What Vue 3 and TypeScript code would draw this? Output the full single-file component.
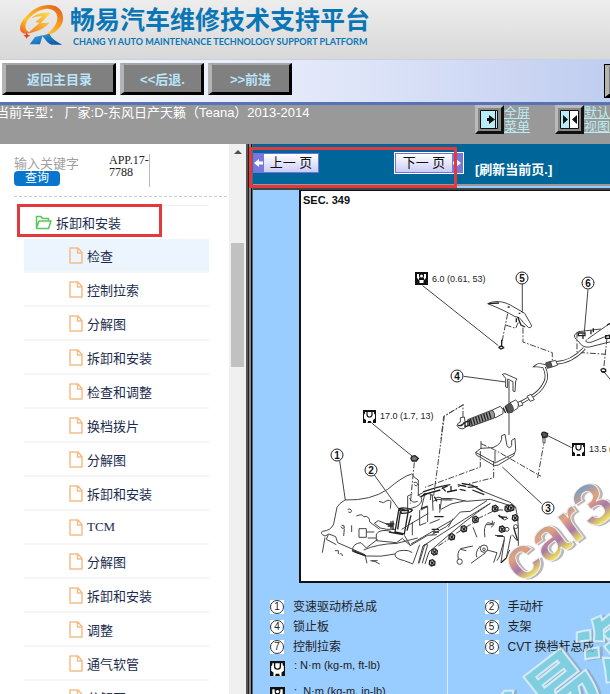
<script setup lang="ts">
import { ref } from 'vue'

interface LegendRow {
  left: [string, string]
  right: [string, string]
}

const keyword = ref('')
const selected = ref(0)
const items: string[] = [
  '检查', '控制拉索', '分解图', '拆卸和安装', '检查和调整', '换档拨片', '分解图',
  '拆卸和安装', 'TCM', '分解图', '拆卸和安装', '调整', '通气软管', '分解图',
]
const legend: LegendRow[] = [
  { left: ['1', '变速驱动桥总成'], right: ['2', '手动杆'] },
  { left: ['4', '锁止板'], right: ['5', '支架'] },
  { left: ['7', '控制拉索'], right: ['8', 'CVT 换档杆总成'] },
]
const callouts = [
  { n: 5, x: 521, y: 279 },
  { n: 6, x: 587, y: 284 },
  { n: 4, x: 456, y: 377 },
  { n: 1, x: 336, y: 456 },
  { n: 2, x: 370, y: 471 },
  { n: 3, x: 547, y: 509 },
]
const bolts: [number, number][] = [
  [552, 134], [590, 134], [493, 167], [458, 195], [422, 219], [370, 264],
  [612, 162], [573, 196], [363, 297], [600, 132],
]
</script>

<template>
  <div class="page">
    <header class="banner">
      <svg class="logo" viewBox="0 0 210 177" aria-hidden="true">
        <defs>
          <linearGradient id="flame" x1="0" y1="1" x2="1" y2="0">
            <stop offset="0" stop-color="#e8451c" />
            <stop offset=".35" stop-color="#fdc92a" />
            <stop offset=".65" stop-color="#f79a1c" />
            <stop offset="1" stop-color="#e0501c" />
          </linearGradient>
          <linearGradient id="zed" x1="0" y1="1" x2="1" y2="0">
            <stop offset="0" stop-color="#f0781e" />
            <stop offset="1" stop-color="#ffe34a" />
          </linearGradient>
          <linearGradient id="leg" x1="0" y1="0" x2="1" y2="1">
            <stop offset="0" stop-color="#35a3e6" />
            <stop offset="1" stop-color="#0a4f9e" />
          </linearGradient>
        </defs>
        <path fill="url(#flame)" d="M72 101C50 92 62 62 84 44C100 27 123 14 150 15C176 16 191 35 189 59C187 84 160 105 125 111C151 97 171 78 172 54C172 35 155 24 136 27C110 31 88 49 79 68C73 82 77 92 92 98Z" />
        <path fill="url(#zed)" d="M94 56C106 42 122 37 153 38L122 70L148 68C135 84 114 94 82 101L119 68L106 67L127 49C113 48 105 50 94 56Z" />
        <path fill="url(#leg)" d="M89 133L105 111L128 106L120 133ZM126 107L149 101C153 115 168 123 187 134L154 134C142 129 137 119 126 107Z" />
        <path fill="#e63c24" d="M80 96L83 104L91 107L83 110L80 117L77 110L70 107L77 104Z" />
      </svg>
      <div class="brand">
        <h1>畅易汽车维修技术支持平台</h1>
        <p>CHANG YI AUTO MAINTENANCE TECHNOLOGY SUPPORT PLATFORM</p>
      </div>
    </header>

    <nav class="toolbar">
      <button type="button" class="wide">返回主目录</button>
      <button type="button">&lt;&lt;后退.</button>
      <button type="button">&gt;&gt;前进</button>
      <button type="button" class="exit" aria-label="退出"></button>
    </nav>

    <div class="status">
      <div class="model">当前车型： 厂家:D-东风日产天籁（Teana）2013-2014</div>
      <a href="#full" class="view">
        <svg viewBox="0 0 29 29" aria-hidden="true">
          <path fill="#bbb" d="M0 0h29l-3 3H3v23l-3 3z" />
          <path fill="#111" d="M29 0v29H0l3-3h23V3z" />
          <path fill="#888" d="M3 3h23v23H3z" />
          <path fill="#b9ecf5" stroke="#111" stroke-width="1" d="M5.500 5.500h17v18h-17z" />
          <path fill="#111" d="M14 10l6 4.500-6 4.500zM12 13h3v3h-3zM20 6h1v17h-1z" />
        </svg>
        <span>全屏<br>菜单</span>
      </a>
      <a href="#default" class="view">
        <svg viewBox="0 0 29 29" aria-hidden="true">
          <path fill="#bbb" d="M0 0h29l-3 3H3v23l-3 3z" />
          <path fill="#111" d="M29 0v29H0l3-3h23V3z" />
          <path fill="#888" d="M3 3h23v23H3z" />
          <path fill="#fff" stroke="#111" stroke-width="1" d="M5.500 5.500h18v18h-18z" />
          <path fill="#b9ecf5" d="M6 6h8v17H6z" />
          <path fill="#111" d="M14 6h1v17h-1zM8 10l5 4.500L8 19zM22 10l-5 4.500 5 4.500z" />
        </svg>
        <span>默认<br>视图</span>
      </a>
    </div>

    <div class="body">
      <aside class="side">
        <form class="search" @submit.prevent>
          <div class="query">
            <input v-model="keyword" aria-label="输入关键字" placeholder="输入关键字">
            <button type="submit">查询</button>
          </div>
          <div class="code">APP.17-7788</div>
        </form>
        <div class="tree">
          <div class="folder">
            <svg viewBox="0 0 17 15" aria-hidden="true">
              <path fill="none" stroke="#5cc45c" stroke-width="1.500" stroke-linejoin="round" d="M1.500 13V1.500h4.500l1.500 2h6v2.500M1.500 13l2.500-7h12l-2.500 7.500H2z" />
            </svg>
            <span>拆卸和安装</span>
            <i class="mark"></i>
          </div>
          <ul>
            <li v-for="(item, i) in items" :key="i">
              <a href="#doc" :class="{ active: selected === i }" @click.prevent="selected = i">
                <svg viewBox="0 0 14 17" aria-hidden="true">
                  <path fill="none" stroke="#f4bd88" stroke-width="1.500" stroke-linejoin="round" d="M1 1h8l4 4.500V16H1zM8.500 1v5H13" />
                </svg>
                <span>{{ item }}</span>
              </a>
            </li>
          </ul>
        </div>
      </aside>
      <div class="scroll">
        <i class="arrow"></i>
        <i class="thumb"></i>
      </div>
      <div class="split"></div>

      <main class="doc">
        <div class="pager">
          <button type="button" class="prev">
            <i><svg viewBox="0 0 10 10" aria-hidden="true"><path fill="#fff" d="M0 5l5-4v2.500h4v3H5V9z" /></svg></i>
            <span>上一 页</span>
          </button>
          <button type="button" class="next">
            <span>下一 页</span>
            <i><svg viewBox="0 0 10 10" aria-hidden="true"><path fill="#fff" d="M9 5L4 1v2.500H1v3h3V9z" /></svg></i>
          </button>
          <a href="#reload">[刷新当前页.]</a>
          <i class="mark"></i>
        </div>

        <div class="sheet">
          <figure>
            <svg viewBox="300 192 310 390" preserveAspectRatio="xMinYMin slice" role="img" aria-label="SEC. 349">
              <defs>
                <g id="torque">
                  <path fill="#111" d="M0 0h13v13H0z" />
                  <path fill="#fff" d="M2 2h9v1.500l1 1v4L10 10v3H8.500l-.5-2H5l-.5 2H3v-3L1 8.500v-4l1-1z" />
                  <path fill="none" stroke="#111" stroke-width="1.200" d="M4 1.500v3a2.500 2.500 0 0 0 5 0v-3" />
                </g>
                <g id="torque-in">
                  <path fill="#111" d="M0 0h13v13H0z" />
                  <path fill="#fff" d="M2 2h2v2a2.500 2.500 0 0 0 5 0V2h2v4L8.500 8.500V11h-4V8.500L2 6z" />
                  <circle cx="6.500" cy="4" r="1.500" fill="#fff" />
                  <path fill="#111" d="M4 6h5v2H4z" />
                </g>
              </defs>
              <text class="sec" x="302" y="205">SEC. 349</text>
              <text class="val" x="431" y="283">6.0 (0.61, 53)</text>
              <text class="val" x="379" y="420">17.0 (1.7, 13)</text>
              <text class="val" x="588" y="453">13.5 (</text>
              <use href="#torque-in" x="414" y="273" />
              <use href="#torque" x="362" y="411" />
              <use href="#torque" x="571" y="444" />

              <g class="ink" transform="translate(290 190) scale(.3333)">
                <path d="M395 290L622 470M694 284V372M891 302L880 430M518 562L644 579" />
                <path d="M590 344L604 339Q632 334 658 348L701 373L721 408Q724 416 713 416L697 401Q686 382 672 383Q641 364 590 344Z" />
                <path class="bold" d="M592 344L624 342M680 384L690 408L702 414M676 388V400M650 354h6M683 373h5" />
                <path class="dash" d="M650 374L632 464M644 408L674 418L682 400M696 416V459L784 491V516M858 430V490L945 496M948 448L938 540" />
                <path class="bold" d="M632 452V474M624 476Q630 466 638 476L630 480Z" />
                <path d="M850 438Q848 446 862 456Q874 478 896 474L960 458M850 438L862 428L930 420M886 452Q880 462 900 460L960 436M890 450L944 412L960 402" />
                <path class="bold" d="M862 432h20v8h-20zM900 424v12M907 418v12M948 408l12-6M944 440h12v8h-12zM876 436v14M930 542q6-6 14 0v6h-12zM934 550h8" />
                <path d="M942 552L960 574" />
              </g>

              <g class="ink" transform="translate(440 330) scale(.3333)">
                <path class="tube" d="M342 102Q392 100 430 58" />
                <path class="tube-in" d="M342 102Q392 100 430 58" />
                <path class="tube" d="M316 112Q296 104 288 110Q296 110 308 112Q322 140 312 160Q298 190 266 206L238 222" />
                <path class="tube-in" d="M316 112Q296 104 288 110Q296 110 308 112Q322 140 312 160Q298 190 266 206L238 222" />
                <path fill="#fff" d="M328 98L344 94L350 108L334 114Z" />
                <path fill="#555" d="M314 102L328 97L333 114L319 118Z" />
                <path fill="#fff" d="M258 202L270 196L280 212L268 217ZM230 220L240 216L246 228L234 232Z" />
                <path fill="#fff" d="M206 222L224 213Q236 220 230 238L212 249Z" />
                <path fill="#555" d="M194 230L208 222Q222 236 214 250L200 252Z" />
                <path fill="#fff" d="M154 243L178 232Q190 240 186 254L162 267Z" />
                <path fill="#999" d="M80 272L154 243Q164 254 160 267L88 293Q78 284 80 272Z" />
                <path class="bold" d="M88 270l6 20M96 267l6 20M104 264l6 20M112 261l6 20M120 258l6 20M128 255l6 20M136 252l6 20M144 249l6 20M186 236l8 16M192 232l8 18" />
                <path fill="#fff" d="M58 266L70 264L72 278L80 276V290L66 300Q52 300 48 290Q50 280 58 280Z" />
                <path class="bold" d="M50 288Q62 294 70 280M72 280l14-5v14l-14 4z" />
                <path fill="#fff" d="M184 136L192 134L228 150L224 156L222 188L216 186L216 158L200 150L200 176L194 174V148Z" />
                <path d="M204 156V228M204 252V318" />
                <path class="dash" d="M66 264V228L8 262L0 330" />
                <path fill="#fff" d="M104 370L120 358L156 356Q186 344 182 320L192 316L198 350Q206 362 212 350V334L222 328L224 364L218 380L172 408L160 410L106 378Z" />
                <path d="M104 370L162 402L222 372M120 360V336M162 398V366" />
                <path class="dash" d="M120 344L160 362L300 442" />
                <path class="bold" fill="#555" d="M302 316Q302 308 312 310L320 314L318 324L306 326Z" />
                <path d="M306 326V342h6V326M320 320L392 356" />
              </g>

              <g class="ink" transform="translate(290 380) scale(.3333)">
                <path d="M242 132L364 232M146 246L163 363M250 288L322 388M752 374L634 264" />
                <path class="bold" fill="#777" d="M360 238Q362 230 372 230L382 238L376 246L364 246Z" />
                <path class="dash" d="M370 250L358 374M518 76L460 112L428 350M568 216V264L402 325M608 246V296L496 324M740 297L758 196" />
              </g>

              <g class="ink" transform="translate(310 465) scale(.3333)">
                <path d="M102 108Q180 110 230 76Q274 38 302 30Q308 34 310 40L322 48V94M102 108Q84 118 78 130L68 180Q60 200 34 202Q26 210 42 216L54 210L74 218L80 236L162 272L168 298M42 220L34 266M52 212L46 226L76 242" />
                <path d="M110 136q8-4 12 4q-2 10-10 4M92 184q10-2 8 8q-8 4-10-4M100 194l-2 22M122 184v20M72 260h10M82 260v10M86 270q8-4 8 6M178 290q14 0 28 10M136 156Q154 148 158 158Q176 154 176 174L206 196M204 112L218 116Q232 104 240 112L238 134M182 290h18" />
                <path d="M144 194h22v26h-22zM166 204h24M170 222h26M190 178L202 170L242 186M190 178L208 192Q224 198 252 196M196 210Q208 194 240 202M196 210V230L256 236L276 222M124 262Q124 238 150 236L166 252L200 226M124 262L166 276M158 258Q198 240 258 238L320 222M166 276Q210 280 252 270Q258 256 292 260L304 266M252 270Q250 284 280 290L306 300" />
                <path class="bold" d="M264 134L252 204L280 210L292 140ZM264 134Q280 128 304 138Q300 148 272 148ZM270 140h24M226 180h24M230 186h16M240 172v22M246 170v28M126 260l34 14M132 264l32 12M234 204L276 212M268 144l-8 52M300 154l-12 46" />
                <path d="M304 90L290 96V132M296 102Q302 120 320 112M322 94L330 98L342 88L360 90L358 108M330 98Q338 116 316 128L286 138M342 88L330 138L350 128V174M358 94L364 92L366 140M308 56q10-4 12 6q-4 8-10 0M320 94L336 86M372 104Q380 96 392 102L386 146M326 138V184L346 176M386 120V136M352 148L272 196M366 112Q380 102 398 108L424 108" />
                <path class="bold" d="M336 84Q380 68 418 62M452 58L484 64L516 82M336 92L388 78M392 74l18-8M408 84L438 78M440 62l26 6M470 70l30-2M394 70l10 12M420 66v14M446 76l18 4M484 78l36 14M330 98l18-8M370 98l8 14M396 104h24M370 158h28M362 196h22M330 134l20-8M366 204h18" />
                <path d="M392 104Q430 100 468 112L538 106L614 130L620 162L622 192V254M390 136L420 120L464 110M538 118L460 166L376 220L336 246L322 298M528 110L478 142L448 144L406 188L362 212M426 164L412 190M538 118Q470 162 354 264L342 300M386 166L356 178M304 174V214M300 240L420 170M280 214L298 244L276 226M296 246L350 214L378 212M516 82L600 116L614 130" />
                <path d="M326 242L306 298M342 240L324 298M350 242L334 298M336 246L350 240M486 190L498 220M522 220Q516 188 530 176L548 180M526 182h18v-12M560 138h16M564 152L580 168L592 162M552 214L580 218V226L566 276L558 290M580 226L570 296M600 214L586 282L596 258M448 254L486 246M442 286Q438 264 448 256L466 260M528 258L558 266L548 296M508 246Q490 266 498 280M480 298L524 266M604 212L618 230M540 190q10-4 10-16" />
                <path class="bold" d="M562 154l16 12M564 158l24 2M558 216h18M572 190l10 10M608 190l12 40M586 282l-16 14" />
                <path class="dash" d="M382 246L430 214M436 208L490 174M500 164L550 140" />
                <g v-for="(b, i) in bolts" :key="i" :transform="`translate(${b[0]} ${b[1]})`">
                  <path class="bold" fill="#ddd" d="M-7-7L2-10L9-4L8 6L-2 9L-8 4Z" />
                  <path class="bold" d="M-4-5L5 5M5-5L-3 5" />
                </g>
                <circle cx="519" cy="254" r="11" />
                <circle cx="519" cy="256" r="4" />
                <circle cx="446" cy="293" r="8" />
                <circle cx="588" cy="196" r="6" />
                <circle cx="614" cy="188" r="6" />
              </g>

              <g v-for="c in callouts" :key="c.n" class="callout">
                <circle :cx="c.x" :cy="c.y" r="6" />
                <text :x="c.x" :y="c.y + 4">{{ c.n }}</text>
              </g>
            </svg>
          </figure>

          <table class="legend">
            <tbody>
              <tr v-for="row in legend" :key="row.left[0]">
                <td>
                  <div><b><i>{{ row.left[0] }}</i></b><span>{{ row.left[1] }}</span></div>
                </td>
                <td class="second">
                  <div><b><i>{{ row.right[0] }}</i></b><span>{{ row.right[1] }}</span></div>
                </td>
              </tr>
              <tr>
                <td>
                  <div class="unit">
                    <svg viewBox="0 0 13 13" aria-hidden="true"><use href="#torque" /></svg>
                    <span>: N·m (kg-m, ft-lb)</span>
                  </div>
                </td>
                <td class="second"></td>
              </tr>
              <tr>
                <td>
                  <div class="unit">
                    <svg viewBox="0 0 13 13" aria-hidden="true"><use href="#torque-in" /></svg>
                    <span>:&nbsp; N·m (kg-m, in-lb)</span>
                  </div>
                </td>
                <td class="second"></td>
              </tr>
            </tbody>
          </table>

          <svg class="watermark" viewBox="490 470 120 224" aria-hidden="true">
            <defs>
              <linearGradient id="rainbow" x1="0" y1="0" x2="0" y2="1">
                <stop offset=".2" stop-color="#7f9cc0" />
                <stop offset=".42" stop-color="#e5a27c" />
                <stop offset=".62" stop-color="#a878a8" />
                <stop offset=".8" stop-color="#efe45c" />
              </linearGradient>
            </defs>
            <g transform="translate(520 585) rotate(-37)">
              <text class="latin shade" x="2" y="2">car3</text>
              <text class="latin" fill="url(#rainbow)">car3</text>
            </g>
            <g class="faint" transform="translate(494 772) rotate(-38)">
              <text class="han shade" x="2" y="2">畅易汽</text>
              <text class="han">畅易汽</text>
            </g>
          </svg>
        </div>
      </main>
    </div>
  </div>
</template>

<style>
body {
  margin: 0;
  overflow: hidden;
}
</style>

<style scoped>
.page {
  display: flex;
  flex-direction: column;
  height: 100vh;
  overflow: hidden;
  background: #fff;
  font-family: "Liberation Sans", "Noto Sans CJK SC", sans-serif;
  font-size: 13px;
}
.page i {
  font-style: normal;
}
button {
  font-family: inherit;
  cursor: pointer;
}
.banner {
  display: flex;
  flex: none;
  height: 59px;
  background: linear-gradient(#ededed, #d8d8d8);
}
.logo {
  flex: none;
  width: 70px;
  height: 59px;
}
.brand {
  color: #0a76b6;
  white-space: nowrap;
}
.brand h1 {
  margin: 4px 0 0;
  font-size: 25px;
  line-height: 32px;
  font-weight: 700;
}
.brand p {
  margin: 0 0 0 3px;
  font-family: Lato, "Liberation Sans", sans-serif;
  font-size: 9px;
  line-height: 11px;
  font-weight: 700;
}
.toolbar {
  display: flex;
  flex: none;
  gap: 4px;
  height: 43px;
  padding: 3px 0 0 2px;
  box-sizing: border-box;
  overflow: hidden;
  background: linear-gradient(to right, #fff, #dde4f8 60%, #c0cdf0);
  border-top: 1px solid #c8d0e4;
}
.toolbar button {
  flex: none;
  width: 84px;
  height: 32px;
  padding: 0;
  border-style: solid;
  border-width: 2px 3px 3px 4px;
  border-color: #a6a6a6 #000 #000 #b4b4b4;
  background: #808080;
  color: #b9e4fa;
  font-size: 13px;
  font-weight: 700;
}
.toolbar .wide {
  width: 114px;
}
.toolbar .exit {
  margin: 2px -79px 0 auto;
  outline: 1px solid #000;
}
.status {
  display: flex;
  flex: none;
  height: 42px;
  box-sizing: border-box;
  border-top: 3px solid #5872b6;
  background: #999;
  color: #fff;
  line-height: 15px;
}
.model {
  flex: 1;
  margin-left: -4px;
  white-space: nowrap;
}
.view {
  display: flex;
  flex: none;
  width: 80px;
  color: #b9ecf0;
  line-height: 14px;
}
.view:last-child {
  width: 55px;
}
.view svg {
  width: 29px;
  height: 29px;
}
.view span {
  padding-top: 1px;
}
.body {
  display: flex;
  flex: 1;
  min-height: 0;
}
.side {
  flex: none;
  width: 229px;
  overflow: hidden;
  color: #1b2c4e;
}
.search {
  display: flex;
  height: 53px;
  margin: 0 2px 0 14px;
  padding-top: 10px;
  box-sizing: border-box;
  border-bottom: 1px dashed #ccc;
}
.query {
  width: 95px;
  padding-top: 2px;
}
.query input {
  display: block;
  width: 90px;
  height: 15px;
  padding: 0;
  border: 0;
  outline: 0;
  background: transparent;
  font-family: inherit;
  font-size: 13px;
}
.query input::placeholder {
  color: #a0a0a0;
}
.query button {
  display: block;
  width: 46px;
  height: 15px;
  padding: 0;
  border: 0;
  border-radius: 4px;
  background: #0876cc;
  color: #fff;
  font-size: 12px;
  line-height: 15px;
}
.code {
  width: 40px;
  height: 33px;
  border-right: 1px solid #bbb;
  color: #222;
  font-family: "Liberation Serif", serif;
  font-size: 12px;
  line-height: 12px;
}
.tree {
  margin: 8px 20px 0 24px;
  border-top: 1px solid #f0f0f0;
}
.folder {
  position: relative;
  display: flex;
  align-items: center;
  gap: 4px;
  height: 33px;
  padding-left: 11px;
}
.folder svg {
  width: 17px;
  height: 15px;
}
.mark {
  position: absolute;
  box-sizing: border-box;
  border: 3px solid #e4393c;
}
.folder .mark {
  left: -7px;
  top: -2px;
  width: 145px;
  height: 33px;
}
ul {
  margin: 0;
  padding: 0;
  list-style: none;
}
li a {
  display: flex;
  align-items: center;
  gap: 4px;
  height: 34px;
  padding-left: 45px;
  box-sizing: border-box;
  border-bottom: 2px solid #f5f5f5;
  color: inherit;
  font-family: "Liberation Serif", "Noto Sans CJK SC", serif;
  text-decoration: none;
}
li a.active {
  background: #ecf5fe;
}
li svg {
  width: 14px;
  height: 17px;
}
.scroll {
  display: flex;
  flex: none;
  flex-direction: column;
  align-items: center;
  width: 17px;
  background: #f0f0f0;
}
.arrow {
  margin-top: 6px;
  border: 4px solid transparent;
  border-top-width: 0;
  border-bottom-color: #505050;
}
.thumb {
  width: 13px;
  height: 124px;
  margin-top: 89px;
  background: #c1c1c1;
}
.split {
  flex: none;
  width: 7px;
  background: linear-gradient(to right, #555 0 2px, #222 2px 3px, #888 3px 5px, #000 5px 6px, #567 6px);
}
.doc {
  display: flex;
  flex: 1;
  flex-direction: column;
  min-width: 0;
}
.pager {
  position: relative;
  display: flex;
  flex: none;
  align-items: flex-start;
  height: 46px;
  padding-top: 9px;
  box-sizing: border-box;
  background: #069;
  border-bottom: 2px solid #444;
  box-shadow: inset 0 -2px #99ccff, inset 0 -4px #999;
}
.pager .mark {
  left: -4px;
  top: 3px;
  width: 208px;
  height: 41px;
}
.pager button {
  display: flex;
  flex: none;
  height: 20px;
  padding: 0;
  border: 1px solid #6f73dc;
  background: linear-gradient(#fff, #ccccf6);
  color: #111;
  font-size: 13px;
  line-height: 18px;
}
.pager button i {
  display: flex;
  align-items: center;
  width: 10px;
  height: 18px;
  background: #7878e0;
}
.pager button svg {
  width: 10px;
  height: 10px;
}
.pager button span {
  flex: 1;
  white-space: nowrap;
}
.prev {
  width: 66px;
}
.next {
  width: 68px;
  margin-left: 76px;
  outline: 1px solid #fff;
}
.pager a {
  margin: 8px 0 0 12px;
  color: #fff;
  font-weight: 700;
  line-height: 18px;
  text-decoration: none;
  white-space: nowrap;
}
.sheet {
  position: relative;
  flex: 1;
  min-height: 0;
  overflow: hidden;
  background: #99ccff;
}
figure {
  height: 390px;
  margin: 0 0 0 46px;
  border: solid #111;
  border-width: 1px 0 2px 2px;
  background: #fff;
}
figure svg {
  display: block;
  width: 100%;
  height: 390px;
}
.sec {
  font-size: 11px;
  font-weight: 700;
  fill: #111;
}
.val {
  font-size: 9px;
  fill: #222;
}
.ink {
  fill: none;
  stroke: #444;
  stroke-width: 3;
}
.ink .bold {
  stroke: #222;
  stroke-width: 4;
}
.ink .dash {
  stroke-dasharray: 18 5 5 5;
}
.ink .tube {
  stroke: #333;
  stroke-width: 10;
}
.ink .tube-in {
  stroke: #fff;
  stroke-width: 5;
}
.callout circle {
  fill: #fff;
  stroke: #222;
}
.callout text {
  font-size: 10px;
  font-weight: 700;
  text-anchor: middle;
  fill: #111;
}
.legend {
  width: 100%;
  table-layout: fixed;
  border-collapse: collapse;
  color: #222;
  font-size: 12px;
  line-height: 20px;
}
.legend td {
  width: 194px;
  height: 20px;
  box-sizing: border-box;
  padding: 0 0 0 17px;
}
.legend td.second {
  width: auto;
  padding-left: 37px;
  border-left: 1px solid #dcecfa;
}
.legend tr:first-child td {
  padding-top: 14px;
}
.legend div {
  display: flex;
  align-items: center;
  gap: 9px;
  white-space: nowrap;
}
.legend b {
  flex: none;
  width: 14px;
  height: 14px;
  background: #fff;
}
.legend b i {
  display: block;
  width: 12px;
  height: 12px;
  border: 1px solid #333;
  border-radius: 50%;
  font-size: 10px;
  font-weight: 400;
  line-height: 12px;
  text-align: center;
}
.legend .unit {
  align-items: flex-start;
  height: 26px;
  font-size: 11px;
  line-height: 16px;
}
.legend .unit svg {
  width: 15px;
  height: 15px;
  margin-top: 4px;
}
.watermark {
  position: absolute;
  left: 237px;
  top: 280px;
  width: 120px;
  height: 224px;
  pointer-events: none;
}
.latin {
  font-size: 60px;
  font-weight: 700;
  stroke: #eee;
  stroke-width: 1px;
}
.faint {
  opacity: .75;
}
.han {
  font-family: "Noto Sans CJK SC", sans-serif;
  font-size: 70px;
  font-weight: 900;
  fill: #78d0d8;
  stroke: #e8f4f4;
  stroke-width: 2px;
}
.watermark .shade {
  fill: #8a8a8a;
  stroke: #8a8a8a;
  opacity: .6;
}
</style>
